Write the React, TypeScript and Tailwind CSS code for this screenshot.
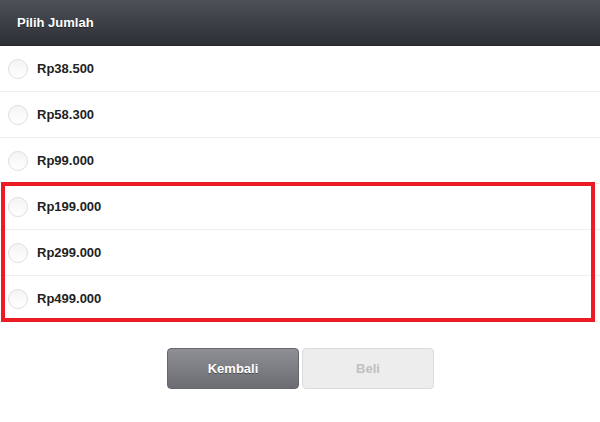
import React from "react";

const amounts = ["Rp38.500", "Rp58.300", "Rp99.000", "Rp199.000", "Rp299.000", "Rp499.000"];

function Radio() {
  return (
    <span className="h-[20px] w-[20px] shrink-0 rounded-full border border-[#dedede] bg-gradient-to-b from-[#f4f4f4] to-[#ffffff]" />
  );
}

export default function App() {
  return (
    <div className="relative w-[600px] h-[422px] bg-white font-['Liberation_Sans',Arial,sans-serif]">
      {/* Header */}
      <div className="h-[46px] flex items-center px-[17px] bg-gradient-to-b from-[#4d5057] to-[#2d3035] border-b border-[#25272b]">
        <h1 className="text-[13px] font-bold text-white [text-shadow:0_1px_0_rgba(0,0,0,0.5)]">
          Pilih Jumlah
        </h1>
      </div>

      {/* Options */}
      <div>
        {amounts.map((a) => (
          <label
            key={a}
            className="h-[46px] flex items-center gap-[9px] pl-[8px] border-b border-[#efefef]"
          >
            <Radio />
            <span className="text-[13px] font-bold text-[#222]">{a}</span>
          </label>
        ))}
      </div>

      {/* Buttons */}
      <div className="flex justify-center gap-[3px] mt-[26px] pl-[1px]">
        <button className="w-[132px] h-[41px] rounded-[4px] bg-gradient-to-b from-[#8e9095] to-[#6c6d72] border border-[#66676b] text-[13px] font-bold text-white [text-shadow:0_1px_0_rgba(0,0,0,0.4)]">
          Kembali
        </button>
        <button className="w-[132px] h-[41px] rounded-[4px] bg-[#ededed] border border-[#dcdcdc] text-[13px] font-bold text-[#c0c0c0]">
          Beli
        </button>
      </div>

      {/* Highlight box */}
      <div className="absolute left-[1px] top-[182px] w-[594px] h-[140px] border-[4px] border-[#ec1c24] pointer-events-none" />
    </div>
  );
}
